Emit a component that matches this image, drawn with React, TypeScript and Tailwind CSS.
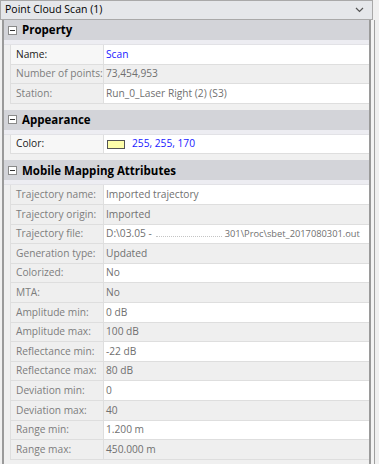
import React from "react";

type Row = { label: string; value: React.ReactNode; dark?: boolean };

const font = { fontFamily: '"Open Sans", "Noto Sans", Arial, sans-serif' };

function MinusBox() {
  return (
    <span className="flex h-[9px] w-[9px] shrink-0 items-center justify-center border border-[#8a8a8a] bg-white">
      <span className="h-px w-[5px] bg-[#333]" />
    </span>
  );
}

function Section({ title, rows }: { title: string; rows: Row[] }) {
  return (
    <div>
      <div className="flex h-[20px] items-center gap-[5px] bg-[#d3d4d9] pl-[4px]">
        <MinusBox />
        <span className="text-[11.5px] font-bold text-black">{title}</span>
      </div>
      <div className="h-[5px] border-b border-[#e2e2e6] bg-[#ededf2]" />
      <div className="pl-[6px]">
        {rows.map((r, i) => (
          <div key={r.label} className="flex h-[19.6px] border-b border-[#dedede]">
            <div
              className={
                "flex w-[94px] shrink-0 items-center whitespace-nowrap border-x border-[#dedede] pl-[5px] text-[10.2px] " +
                (r.dark ? "bg-[#f7f7f7] text-[#1a1a1a]" : "bg-[#efefef] text-[#7d7d7d]")
              }
            >
              {r.label}
            </div>
            <div
              className={
                "flex min-w-0 flex-1 items-center whitespace-nowrap pl-[2px] text-[10.2px] text-[#707070] " +
                (i % 2 === 0 ? "bg-white" : "bg-[#efefef]")
              }
            >
              {r.value}
            </div>
          </div>
        ))}
      </div>
      <div className="h-[6px]" />
    </div>
  );
}

const property: Row[] = [
  { label: "Name:", value: <span className="text-[#1a1aff]">Scan</span>, dark: true },
  { label: "Number of points:", value: "73,454,953" },
  { label: "Station:", value: "Run_0_Laser Right (2) (S3)" },
];

const appearance: Row[] = [
  {
    label: "Color:",
    dark: true,
    value: (
      <span className="flex items-center">
        <span className="ml-[1px] h-[9px] w-[18px] border border-[#555] bg-[#ffffaa]" />
        <span className="ml-[7px] text-[#1a1aff]">255, 255, 170</span>
      </span>
    ),
  },
];

const mobile: Row[] = [
  { label: "Trajectory name:", value: "Imported trajectory" },
  { label: "Trajectory origin:", value: "Imported" },
  {
    label: "Trajectory file:",
    value: (
      <span className="flex items-center whitespace-nowrap">
        <span>D:\03.05 -</span>
        {/* blurred-out part of the path */}
        <span className="ml-[4px] mr-[3px] mt-[6px] h-0 w-[66px] shrink-0 border-b border-dotted border-[#c4c4c4]" />
        <span className="text-[9.3px]">301\Proc\sbet_2017080301.out</span>
      </span>
    ),
  },
  { label: "Generation type:", value: "Updated" },
  { label: "Colorized:", value: "No" },
  { label: "MTA:", value: "No" },
  { label: "Amplitude min:", value: "0 dB" },
  { label: "Amplitude max:", value: "100 dB" },
  { label: "Reflectance min:", value: "-22 dB" },
  { label: "Reflectance max:", value: "80 dB" },
  { label: "Deviation min:", value: "0" },
  { label: "Deviation max:", value: "40" },
  { label: "Range min:", value: "1.200 m" },
  { label: "Range max:", value: "450.000 m" },
];

export default function App() {
  return (
    <div className="flex h-[464px] w-[379px] flex-col overflow-hidden bg-[#f0f0f0]" style={font}>
      {/* object selector */}
      <div className="flex h-[20px] shrink-0">
        <div className="flex w-[373px] items-center justify-between border border-[#a9a9a9] bg-[#e5e7ea] pl-[4px] pr-[8px]">
          <span className="text-[10.5px] text-black">Point Cloud Scan (1)</span>
          <svg width="9" height="6" viewBox="0 0 9 6" fill="none">
            <path d="M1 1l3.5 3.5L8 1" stroke="#555" strokeWidth="1.2" />
          </svg>
        </div>
      </div>

      <div className="flex min-h-0 flex-1">
        <div className="w-[2px] shrink-0" />
        <div className="w-[369px] shrink-0 border-l-2 border-r-2 border-[#9a9a9a] bg-[#f0f0f0]">
          <Section title="Property" rows={property} />
          <Section title="Appearance" rows={appearance} />
          <Section title="Mobile Mapping Attributes" rows={mobile} />
        </div>
        <div className="w-[3px] shrink-0 bg-[#f4f4f4]" />
        <div className="w-[1px] shrink-0 bg-[#a0a0a0]" />
        <div className="flex-1 bg-[#f0f0f0]" />
      </div>
    </div>
  );
}
